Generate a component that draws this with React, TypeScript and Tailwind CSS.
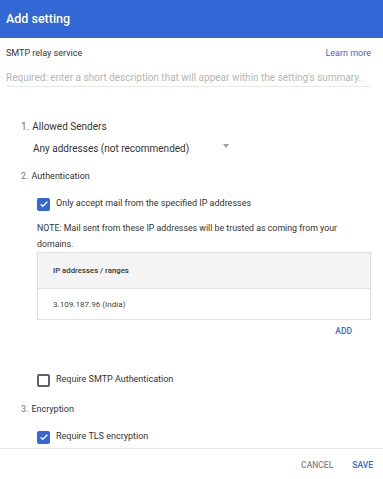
import React from "react";

const Checkbox = ({ checked }: { checked: boolean }) =>
  checked ? (
    <span className="flex h-[13px] w-[13px] items-center justify-center rounded-[2px] bg-[#3367d6]">
      <svg width="10" height="10" viewBox="0 0 24 24" fill="none">
        <path d="M4 12.5l5 5L20 6.5" stroke="white" strokeWidth="3.2" />
      </svg>
    </span>
  ) : (
    <span className="block h-[13px] w-[13px] rounded-[2px] border-2 border-[#5f6368]" />
  );

const Option = ({ checked, label }: { checked: boolean; label: string }) => (
  <div className="flex h-[16px] items-center gap-[6px] pl-[31px]">
    <Checkbox checked={checked} />
    <span className="text-[9px] text-[#333]">{label}</span>
  </div>
);

const Step = ({ n, label, big }: { n: number; label: string; big?: boolean }) => (
  <div className={`flex h-[16px] items-center pl-[15px] text-[#333] ${big ? "text-[10px]" : "text-[9px]"}`}>
    <span className="text-[#757575]">{n}.</span>
    <span className="ml-[3px]">{label}</span>
  </div>
);

export default function App() {
  return (
    <div className="h-[479px] w-[383px] bg-white" style={{ fontFamily: "Roboto, 'Liberation Sans', sans-serif" }}>
      <div className="flex h-[38px] items-center bg-[#3367d6] px-[6px]">
        <h1 className="text-[12.5px] font-medium text-white">Add setting</h1>
      </div>

      <div className="pl-[6px] pr-[12px]">
        <div className="mt-[8px] flex h-[16px] items-center justify-between">
          <span className="text-[9px] text-[#333]">SMTP relay service</span>
          <a className="text-[9px] text-[#3367d6]">Learn more</a>
        </div>
        <div className="mt-[7px] flex h-[18px] items-center whitespace-nowrap border-b border-[#e8e8e8] text-[10px] text-[#b5b5b5]">
          Required: enter a short description that will appear within the setting's summary.
        </div>

        <div className="mt-[31px]">
          <Step n={1} label="Allowed Senders" big />
        </div>
        <div className="mt-[6px] flex h-[16px] w-[223px] items-center justify-between pl-[27px]">
          <span className="text-[10px] text-[#333]">Any addresses (not recommended)</span>
          <span className="mt-[-5px] h-0 w-0 border-x-[3.5px] border-t-[4px] border-x-transparent border-t-[#9e9e9e]" />
        </div>

        <div className="mt-[13px]">
          <Step n={2} label="Authentication" />
        </div>
        <div className="mt-[11px]">
          <Option checked label="Only accept mail from the specified IP addresses" />
        </div>
        <p className="mt-[8px] pl-[31px] pr-[20px] text-[8.8px] leading-[16px] text-[#333]">
          NOTE: Mail sent from these IP addresses will be trusted as coming from your domains.
        </p>
        <div className="ml-[31px] border border-[#e0e0e0]">
          <div className="flex h-[36px] items-center border-b border-[#e0e0e0] bg-[#f4f4f4] pl-[15px] text-[7.8px] font-medium text-[#333]">
            IP addresses / ranges
          </div>
          <div className="flex h-[30px] items-center pl-[15px] text-[8.1px] text-[#444]">
            3.109.187.96 (India)
          </div>
        </div>
        <div className="mt-[3px] flex h-[16px] items-center justify-end pr-[19px]">
          <button className="text-[8.5px] font-medium text-[#3367d6]">ADD</button>
        </div>

        <div className="mt-[33px]">
          <Option checked={false} label="Require SMTP Authentication" />
        </div>
        <div className="mt-[14px]">
          <Step n={3} label="Encryption" />
        </div>
        <div className="mt-[11px]">
          <Option checked label="Require TLS encryption" />
        </div>
      </div>

      <div className="mt-[3px] border-t border-[#e8e8e8]">
        <div className="mt-[8px] flex h-[16px] items-center justify-end gap-[19px] pr-[10px] text-[8.5px] font-medium">
          <button className="text-[#888]">CANCEL</button>
          <button className="text-[#3367d6]">SAVE</button>
        </div>
      </div>
    </div>
  );
}
